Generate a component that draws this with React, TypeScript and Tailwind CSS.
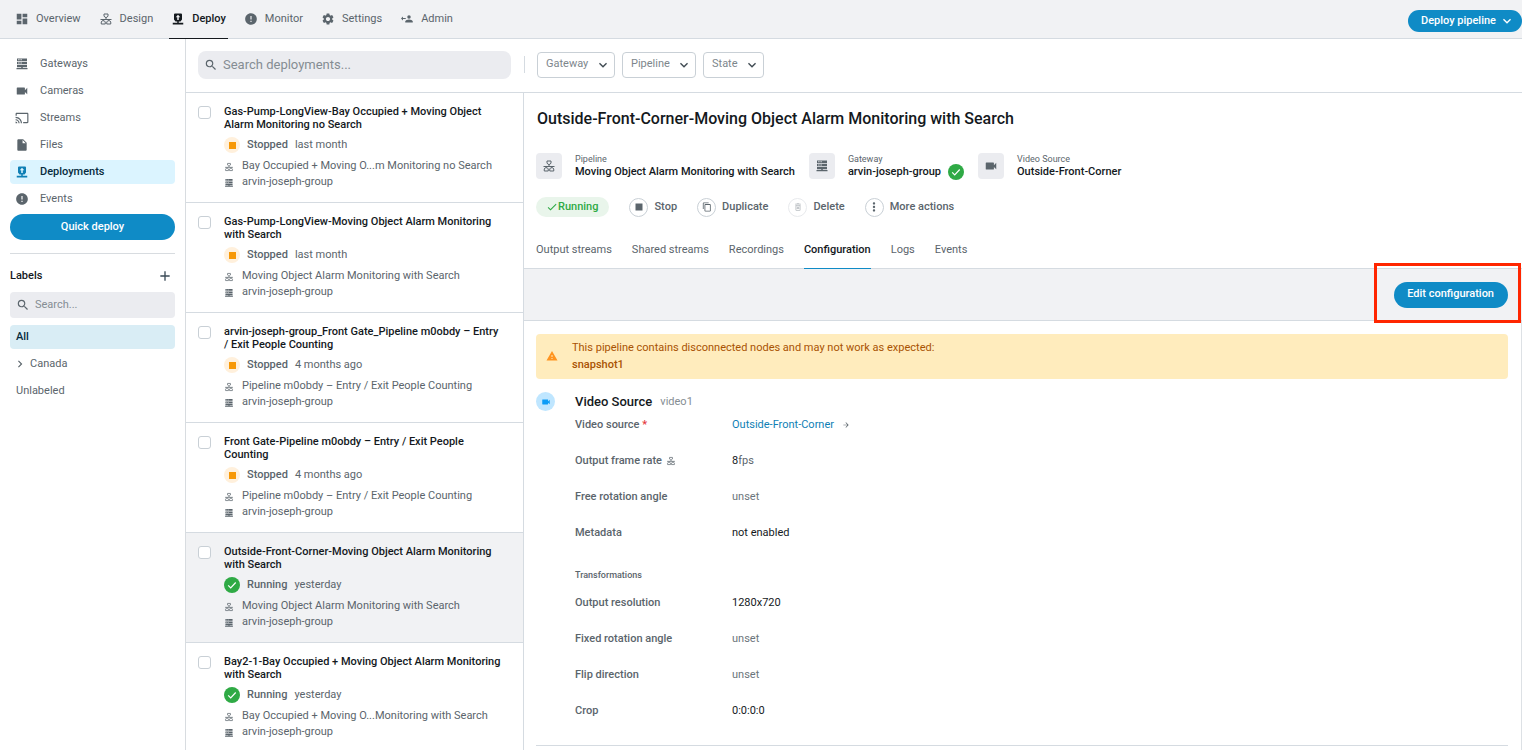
import { useState } from "react";
import type { ReactNode } from "react";
import clsx from "clsx";
import {
  MdAdd,
  MdArrowForward,
  MdCast,
  MdCheck,
  MdChevronRight,
  MdContentCopy,
  MdDashboard,
  MdError,
  MdExpandMore,
  MdInsertDriveFile,
  MdMoreVert,
  MdOutlineDeleteForever,
  MdSearch,
  MdSettings,
  MdStop,
  MdVideocam,
  MdWarning,
} from "react-icons/md";

type IconProps = { className?: string };

function PipelineIcon({ className }: IconProps) {
  return (
    <svg viewBox="-2 -2 28 28" className={className} fill="none" stroke="currentColor" strokeWidth="2" strokeLinejoin="round">
      <path d="M8 2h8v4.500l-4 3-4-3z" />
      <path d="M12 9.500V13M1 13h22M6.500 13v2M17.500 13v2" />
      <path d="M4.500 15.500h4l2 2.500v4h-8v-4zM15.500 15.500h4l2 2.500v4h-8v-4z" />
    </svg>
  );
}

function GatewayIcon({ className }: IconProps) {
  return (
    <svg viewBox="-2 -2 28 28" className={className} fill="currentColor">
      <path
        fillRule="evenodd"
        d="M2 1h20v5H2zM4.500 2.700v1.600h2.500V2.700zM9 2.700v1.600h2.500V2.700zM2 7.500h20v5H2zM4.500 9.200v1.600h2.500V9.200zM9 9.200v1.600h2.500V9.200zM2 14h20v4.500h-8.500V20H23v2.500H1V20h9.500v-1.500H2z"
      />
    </svg>
  );
}

function DeployIcon({ className }: IconProps) {
  return (
    <svg viewBox="-2 -2 28 28" className={className} fill="currentColor">
      <path
        fillRule="evenodd"
        d="M6 1h12a2 2 0 0 1 2 2v10l-3 4h-3.500v2.500H22.500V23h-21v-3.500h9V17H7l-3-4V3a2 2 0 0 1 2-2zm6 2.500L7.500 8.500h3V14h3V8.500h3z"
      />
    </svg>
  );
}

function AdminIcon({ className }: IconProps) {
  return (
    <svg viewBox="-2 -2 28 28" className={className} fill="currentColor">
      <circle cx="16" cy="8" r="3.500" />
      <path d="M8.500 19v-2c0-2.500 4.500-4 7.500-4s7.500 1.500 7.500 4v2z" />
      <path d="M0 11l4-4v2.800h5.500v2.400H4V15z" />
    </svg>
  );
}

const navItems = [
  { name: "Overview", icon: MdDashboard },
  { name: "Design", icon: PipelineIcon },
  { name: "Deploy", icon: DeployIcon },
  { name: "Monitor", icon: MdError },
  { name: "Settings", icon: MdSettings },
  { name: "Admin", icon: AdminIcon },
];

const sideItems = [
  { name: "Gateways", icon: GatewayIcon },
  { name: "Cameras", icon: MdVideocam },
  { name: "Streams", icon: MdCast },
  { name: "Files", icon: MdInsertDriveFile },
  { name: "Deployments", icon: DeployIcon },
  { name: "Events", icon: MdError },
];

const deployments = [
  {
    title: "Gas-Pump-LongView-Bay Occupied + Moving Object Alarm Monitoring no Search",
    running: false,
    when: "last month",
    pipeline: "Bay Occupied + Moving O...m Monitoring no Search",
  },
  {
    title: "Gas-Pump-LongView-Moving Object Alarm Monitoring with Search",
    running: false,
    when: "last month",
    pipeline: "Moving Object Alarm Monitoring with Search",
  },
  {
    title: "arvin-joseph-group_Front Gate_Pipeline m0obdy – Entry / Exit People Counting",
    running: false,
    when: "4 months ago",
    pipeline: "Pipeline m0obdy – Entry / Exit People Counting",
  },
  {
    title: "Front Gate-Pipeline m0obdy – Entry / Exit People Counting",
    running: false,
    when: "4 months ago",
    pipeline: "Pipeline m0obdy – Entry / Exit People Counting",
  },
  {
    title: "Outside-Front-Corner-Moving Object Alarm Monitoring with Search",
    running: true,
    when: "yesterday",
    pipeline: "Moving Object Alarm Monitoring with Search",
  },
  {
    title: "Bay2-1-Bay Occupied + Moving Object Alarm Monitoring with Search",
    running: true,
    when: "yesterday",
    pipeline: "Bay Occupied + Moving O...Monitoring with Search",
  },
];

const tabs = ["Output streams", "Shared streams", "Recordings", "Configuration", "Logs", "Events"];

function TopNav() {
  return (
    <header className="flex h-[39px] shrink-0 items-stretch justify-between border-b border-[#d5dbe1] bg-[#f1f2f4]">
      <nav className="flex gap-3.5 pl-[13px]">
        {navItems.map(({ name, icon: Icon }) => (
          <a
            key={name}
            href="#"
            className={clsx(
              "-mb-px flex items-center gap-[7px] border-b px-0.5",
              name === "Deploy" ? "border-[#14191d] font-medium text-[#14191d]" : "border-transparent text-[#5b656c]"
            )}
          >
            <Icon className="size-3.5" />
            {name}
          </a>
        ))}
      </nav>
      <button className="mt-2.5 flex h-[22px] items-center gap-[3px] rounded-full bg-[#0f8bc6] pr-[7px] pl-[13px] font-medium text-white">
        Deploy pipeline
        <MdExpandMore className="size-4" />
      </button>
    </header>
  );
}

function Sidebar() {
  return (
    <aside className="w-[186px] shrink-0 border-r border-[#d8dce0] px-2.5 pt-[13px]">
      <nav className="flex flex-col gap-[3px]">
        {sideItems.map(({ name, icon: Icon }) => {
          const active = name === "Deployments";
          return (
            <a
              key={name}
              href="#"
              className={clsx(
                "flex h-6 items-center gap-[11px] rounded pl-[5px]",
                active ? "bg-[#dbf4ff] font-medium text-[#072b3d]" : "text-[#5b656c]"
              )}
            >
              <Icon className={clsx("size-3.5", active && "text-[#0f7fb5]")} />
              {name}
            </a>
          );
        })}
      </nav>
      <button className="mt-[3px] h-[26px] w-full rounded-full bg-[#0f8bc6] font-medium text-white">Quick deploy</button>
      <div className="mt-[13px] flex items-center justify-between border-t border-[#d8dce0] pt-3.5">
        <h2 className="font-medium text-[#14191d]">Labels</h2>
        <button aria-label="Add label" className="mr-0.5 text-[#3b4b57]">
          <MdAdd className="size-4" />
        </button>
      </div>
      <label className="mt-2 flex h-[26px] items-center gap-[5px] rounded bg-[#ebecf0] pl-1.5">
        <MdSearch className="size-3.5 shrink-0 text-[#5b656c]" />
        <input
          aria-label="Search labels"
          placeholder="Search..."
          className="w-full min-w-0 bg-transparent outline-none placeholder:text-[#858d93]"
        />
      </label>
      <ul className="mt-[7px] flex flex-col gap-[3px] text-[#5b656c]">
        <li className="flex h-6 items-center rounded bg-[#d9edf5] pl-1.5 font-medium text-[#072b3d]">All</li>
        <li className="flex h-6 items-center gap-[3px] pl-[3px]">
          <MdChevronRight className="size-3.5" />
          Canada
        </li>
        <li className="flex h-6 items-center pl-1.5">Unlabeled</li>
      </ul>
    </aside>
  );
}

function FilterSelect({ name }: { name: string }) {
  return (
    <div className="relative">
      <select
        aria-label={name}
        className="block h-[26px] appearance-none rounded border border-[#c9d0d6] bg-white pr-[25px] pb-0.5 pl-2 text-[#7d868c]"
      >
        <option>{name}</option>
      </select>
      <MdExpandMore className="pointer-events-none absolute top-[5px] right-1 size-4 text-[#3f4a52]" />
    </div>
  );
}

function Toolbar() {
  return (
    <div className="flex h-[54px] shrink-0 items-center border-b border-[#d5dbe1] pb-0.5 pl-3">
      <label className="flex h-7 w-[313px] items-center gap-[5px] rounded-lg bg-[#ebecf0] pl-1.5">
        <MdSearch className="size-3.5 shrink-0 text-[#5b656c]" />
        <input
          aria-label="Search deployments"
          placeholder="Search deployments..."
          className="w-full min-w-0 bg-transparent text-[13px] outline-none placeholder:text-[#858d93]"
        />
      </label>
      <div className="mr-3 ml-[13px] h-[17px] w-px bg-[#d5dbe1]" />
      <div className="flex gap-[7px]">
        <FilterSelect name="Gateway" />
        <FilterSelect name="Pipeline" />
        <FilterSelect name="State" />
      </div>
    </div>
  );
}

function CheckBadge() {
  return (
    <span className="flex size-4 shrink-0 items-center justify-center rounded-full bg-[#2faa45] text-white">
      <svg viewBox="0 0 16 16" className="size-4" fill="none" stroke="currentColor" strokeWidth="1.200">
        <path d="M4.200 8.300l2.500 2.500 5-5.300" />
      </svg>
    </span>
  );
}

function DeploymentCard({ data, selected }: { data: (typeof deployments)[number]; selected: boolean }) {
  return (
    <li className={clsx("flex gap-[13px] border-b border-[#d5dbe1] py-3 pr-5 pl-3", selected && "bg-[#f1f2f4]")}>
      <input
        type="checkbox"
        aria-label={data.title}
        className="mt-[1px] size-[13px] shrink-0 appearance-none rounded-[3px] border border-[#c9d0d6] bg-white"
      />
      <div className="min-w-0 text-[#5b656c]">
        <h3 className="leading-[13px] font-medium text-[#14191d]">{data.title}</h3>
        <div className="mt-1.5 flex h-4 items-center">
          {data.running ? (
            <CheckBadge />
          ) : (
            <span className="flex size-4 items-center justify-center rounded-full bg-[#fff0dc]">
              <span className="size-[7px] bg-[#f79806]" />
            </span>
          )}
          <span className="ml-[7px] font-medium">{data.running ? "Running" : "Stopped"}</span>
          <span className="ml-[7px]">{data.when}</span>
        </div>
        <div className="mt-[5px] flex h-4 items-center gap-2">
          <PipelineIcon className="mt-0.5 size-2.5 shrink-0" />
          <span className="truncate">{data.pipeline}</span>
        </div>
        <div className="flex h-4 items-center gap-2">
          <GatewayIcon className="mt-0.5 size-2.5 shrink-0" />
          arvin-joseph-group
        </div>
      </div>
    </li>
  );
}

function MetaItem({ icon, label, children }: { icon: ReactNode; label: string; children: ReactNode }) {
  return (
    <div className="flex items-center gap-[13px]">
      <span className="flex size-[26px] items-center justify-center rounded bg-[#ebecf0] text-[#5b656c]">{icon}</span>
      <div>
        <p className="text-[9px] leading-3 text-[#5b656c]">{label}</p>
        <p className="flex h-3.5 items-center gap-[7px] font-medium text-[#14191d]">{children}</p>
      </div>
    </div>
  );
}

function ActionButton({ icon, label, disabled }: { icon: ReactNode; label: string; disabled?: boolean }) {
  return (
    <button disabled={disabled} className="flex items-center gap-1.5 font-medium text-[#5b656c]">
      <span
        className={clsx(
          "flex size-[19px] items-center justify-center rounded-full border",
          disabled ? "border-[#e8eaed] text-[#b9bec2]" : "border-[#c9d0d6]"
        )}
      >
        {icon}
      </span>
      {label}
    </button>
  );
}

function Row({ label, children }: { label: ReactNode; children: ReactNode }) {
  return (
    <div className="flex h-9 items-start">
      <dt className="flex w-[157px] shrink-0 items-center gap-1 font-medium text-[#5b656c]">{label}</dt>
      <dd className="flex items-center text-[#14191d]">{children}</dd>
    </div>
  );
}

function Unset() {
  return <span className="text-[#6b757c]">unset</span>;
}

function Configuration() {
  return (
    <div className="grow overflow-hidden border-r border-[#dde1e5] pt-[13px] pr-[13px] pl-3">
      <div className="flex items-center gap-3.5 rounded bg-[#ffecbd] pt-[5px] pb-1.5 pl-2.5 text-[#a95303]">
        <MdWarning className="size-3 text-[#ff9420]" />
        <p className="leading-[17px]">
          This pipeline contains disconnected nodes and may not work as expected:
          <strong className="block font-medium">snapshot1</strong>
        </p>
      </div>
      <section className="mt-[13px] flex gap-5 border-b border-[#d5dbe1] pb-1.5">
        <span className="flex size-[19px] shrink-0 items-center justify-center rounded-full bg-[#bfe6ff] text-[#0b9cf7]">
          <MdVideocam className="size-2.5" />
        </span>
        <div>
          <div className="flex h-5 items-center gap-2">
            <h2 className="text-[13px] font-medium text-[#14191d]">Video Source</h2>
            <span className="text-[#858d93]">video1</span>
          </div>
          <dl className="mt-[5px]">
            <Row
              label={
                <span>
                  Video source <span className="text-[#e5383b]">*</span>
                </span>
              }
            >
              <a href="#" className="flex items-center gap-2 text-[#0f7fb5]">
                Outside-Front-Corner
                <MdArrowForward className="size-2 text-[#5b656c]" />
              </a>
            </Row>
            <Row
              label={
                <>
                  Output frame rate <PipelineIcon className="size-2.5" />
                </>
              }
            >
              8<span className="text-[#5b656c]">fps</span>
            </Row>
            <Row label="Free rotation angle">
              <Unset />
            </Row>
            <Row label="Metadata">not enabled</Row>
          </dl>
          <h3 className="mt-1.5 text-[9px] font-medium text-[#5b656c]">Transformations</h3>
          <dl className="mt-3">
            <Row label="Output resolution">1280x720</Row>
            <Row label="Fixed rotation angle">
              <Unset />
            </Row>
            <Row label="Flip direction">
              <Unset />
            </Row>
            <Row label="Crop">0:0:0:0</Row>
          </dl>
        </div>
      </section>
    </div>
  );
}

function Detail() {
  const [tab, setTab] = useState("Configuration");

  return (
    <main className="flex min-w-0 grow flex-col">
      <h1 className="px-[13px] pt-4 text-base leading-5 font-medium text-[#14191d]">
        Outside-Front-Corner-Moving Object Alarm Monitoring with Search
      </h1>
      <div className="mt-6 flex gap-3.5 px-3">
        <MetaItem icon={<PipelineIcon className="size-3.5" />} label="Pipeline">
          Moving Object Alarm Monitoring with Search
        </MetaItem>
        <MetaItem icon={<GatewayIcon className="size-3.5" />} label="Gateway">
          arvin-joseph-group <CheckBadge />
        </MetaItem>
        <MetaItem icon={<MdVideocam className="size-3.5" />} label="Video Source">
          Outside-Front-Corner
        </MetaItem>
      </div>
      <div className="mt-[18px] flex h-5 items-center gap-5 px-3">
        <span className="flex h-5 items-center rounded-full bg-[#e9f5eb] pr-[11px] pl-2.5 font-medium text-[#2faa45]">
          <MdCheck className="size-3" />
          Running
        </span>
        <ActionButton icon={<MdStop className="size-3.5" />} label="Stop" />
        <ActionButton icon={<MdContentCopy className="size-2.5" />} label="Duplicate" />
        <ActionButton icon={<MdOutlineDeleteForever className="size-2.5" />} label="Delete" disabled />
        <ActionButton icon={<MdMoreVert className="size-3.5" />} label="More actions" />
      </div>
      <div className="mt-3 flex h-10 gap-5 border-b border-[#d5dbe1] px-3">
        {tabs.map((name) => (
          <button
            key={name}
            onClick={() => setTab(name)}
            className={clsx(
              "-mb-px border-b pt-0.5",
              tab === name ? "border-[#0f8bc6] font-medium text-[#14191d]" : "border-transparent text-[#5b656c]"
            )}
          >
            {name}
          </button>
        ))}
      </div>
      <div className="flex h-[52px] shrink-0 items-center justify-end border-b border-[#d5dbe1] bg-[#f1f2f4] pr-3.5">
        <div className="relative">
          <button className="block h-[26px] rounded-full bg-[#0f8bc6] pr-3.5 pb-0.5 pl-[13px] font-medium text-white">
            Edit configuration
          </button>
          {/* highlight frame around the button */}
          <div className="pointer-events-none absolute -top-[19px] -right-[13px] -bottom-[15px] -left-5 border-3 border-[#ff2600]" />
        </div>
      </div>
      <Configuration />
    </main>
  );
}

export default function App() {
  return (
    <div className="flex h-screen flex-col overflow-hidden bg-white font-[Roboto,sans-serif] text-[11px] leading-4">
      <TopNav />
      <div className="flex min-h-0 grow">
        <Sidebar />
        <div className="flex min-w-0 grow flex-col">
          <Toolbar />
          <div className="flex min-h-0 grow">
            <ul className="w-[338px] shrink-0 overflow-hidden border-r border-[#d5dbe1]">
              {deployments.map((item, i) => (
                <DeploymentCard key={item.title} data={item} selected={i === 4} />
              ))}
            </ul>
            <Detail />
          </div>
        </div>
      </div>
    </div>
  );
}
